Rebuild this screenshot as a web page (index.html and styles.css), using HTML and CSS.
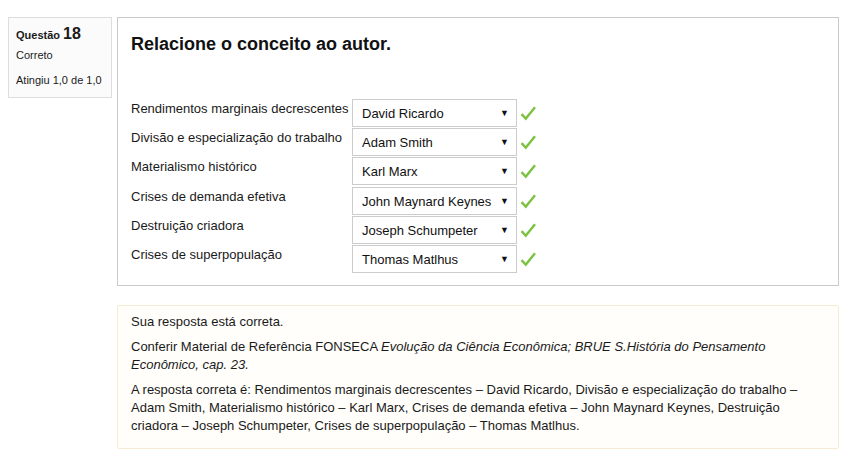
FILE: index.html
```html
<!DOCTYPE html>
<html lang="pt">
<head>
<meta charset="utf-8">
<link rel="stylesheet" href="styles.css">
</head>
<body>
<div class="que">
  <div class="info">
    <div class="qno"><span class="qlabel">Questão</span> <span class="qnum">18</span></div>
    <div class="state">Correto</div>
    <div class="grade">Atingiu 1,0 de 1,0</div>
  </div>
  <div class="content">
    <div class="formulation">
      <h2 class="qtext">Relacione o conceito ao autor.</h2>
      <div class="answers">
        <div class="row"><div class="label">Rendimentos marginais decrescentes</div><div class="select"><span>David Ricardo</span><span class="arrow">▼</span></div><svg class="check" viewBox="0 0 16 16" width="16" height="16"><path d="M1.5 9.2 L5.8 13.6 L15 2.2" /></svg></div>
        <div class="row"><div class="label">Divisão e especialização do trabalho</div><div class="select"><span>Adam Smith</span><span class="arrow">▼</span></div><svg class="check" viewBox="0 0 16 16" width="16" height="16"><path d="M1.5 9.2 L5.8 13.6 L15 2.2" /></svg></div>
        <div class="row"><div class="label">Materialismo histórico</div><div class="select"><span>Karl Marx</span><span class="arrow">▼</span></div><svg class="check" viewBox="0 0 16 16" width="16" height="16"><path d="M1.5 9.2 L5.8 13.6 L15 2.2" /></svg></div>
        <div class="row row-gap"><div class="label">Crises de demanda efetiva</div><div class="select"><span>John Maynard Keynes</span><span class="arrow">▼</span></div><svg class="check" viewBox="0 0 16 16" width="16" height="16"><path d="M1.5 9.2 L5.8 13.6 L15 2.2" /></svg></div>
        <div class="row"><div class="label">Destruição criadora</div><div class="select"><span>Joseph Schumpeter</span><span class="arrow">▼</span></div><svg class="check" viewBox="0 0 16 16" width="16" height="16"><path d="M1.5 9.2 L5.8 13.6 L15 2.2" /></svg></div>
        <div class="row"><div class="label">Crises de superpopulação</div><div class="select"><span>Thomas Matlhus</span><span class="arrow">▼</span></div><svg class="check" viewBox="0 0 16 16" width="16" height="16"><path d="M1.5 9.2 L5.8 13.6 L15 2.2" /></svg></div>
      </div>
    </div>
    <div class="outcome">
      <p>Sua resposta está correta.</p>
      <p>Conferir Material de Referência FONSECA <em>Evolução da Ciência Econômica; BRUE S.História do Pensamento Econômico, cap. 23.</em></p>
      <p>A resposta correta é: Rendimentos marginais decrescentes – David Ricardo, Divisão e especialização do trabalho – Adam Smith, Materialismo histórico – Karl Marx, Crises de demanda efetiva – John Maynard Keynes, Destruição criadora – Joseph Schumpeter, Crises de superpopulação – Thomas Matlhus.</p>
    </div>
  </div>
</div>
</body>
</html>
```
FILE: styles.css
```css
html, body {
  margin: 0;
  padding: 0;
  background: #fff;
}
body {
  font-family: "Liberation Sans", Arial, sans-serif;
  color: #222;
  font-size: 13px;
}
.que {
  display: flex;
  align-items: flex-start;
  gap: 5px;
  padding: 17px 9px 0 8px;
}
.info {
  box-sizing: border-box;
  width: 104px;
  height: 81px;
  flex: none;
  background: #fbfbfb;
  border: 1px solid #dedede;
  padding: 6px 7px;
  font-size: 11px;
  color: #1a1a1a;
}
.qno {
  height: 19px;
  line-height: 19px;
  margin-bottom: 5px;
}
.qlabel {
  font-weight: bold;
}
.qnum {
  font-weight: bold;
  font-size: 16px;
}
.state {
  height: 14px;
  line-height: 14px;
  margin: 1px 0 11px 0;
}
.grade {
  line-height: 14px;
}
.content {
  flex: 1;
  display: flex;
  flex-direction: column;
  gap: 19px;
}
.formulation {
  border: 1px solid #cacaca;
  padding: 15px 13px 12px 13px;
}
.qtext {
  margin: 0 0 44px 0;
  font-size: 18px;
  line-height: 22px;
  font-weight: bold;
  color: #111;
}
.answers {
  display: flex;
  flex-direction: column;
  gap: 1px;
}
.row {
  display: flex;
  align-items: flex-start;
}
.row-gap {
  margin-top: 1px;
}
.label {
  width: 221px;
  flex: none;
  line-height: 16px;
  padding-top: 2px;
  color: #1a1a1a;
  white-space: nowrap;
}
.select {
  box-sizing: border-box;
  width: 165px;
  height: 28px;
  border: 1px solid #cccccc;
  display: flex;
  align-items: center;
  justify-content: space-between;
  padding: 0 7px 0 9px;
  color: #111;
  background: #fff;
}
.arrow {
  font-size: 9px;
  color: #111;
}
.check {
  margin: 6px 0 0 3px;
  fill: none;
  stroke: #7dc242;
  stroke-width: 2.4;
  stroke-linecap: butt;
  stroke-linejoin: miter;
}
.outcome {
  border: 1px solid #f7ebd3;
  background: #fffefa;
  border-radius: 2px;
  padding: 7px 13px 6px 13px;
  line-height: 18px;
  color: #1a1a1a;
}
.outcome p {
  margin: 0 0 7px 0;
}
```
